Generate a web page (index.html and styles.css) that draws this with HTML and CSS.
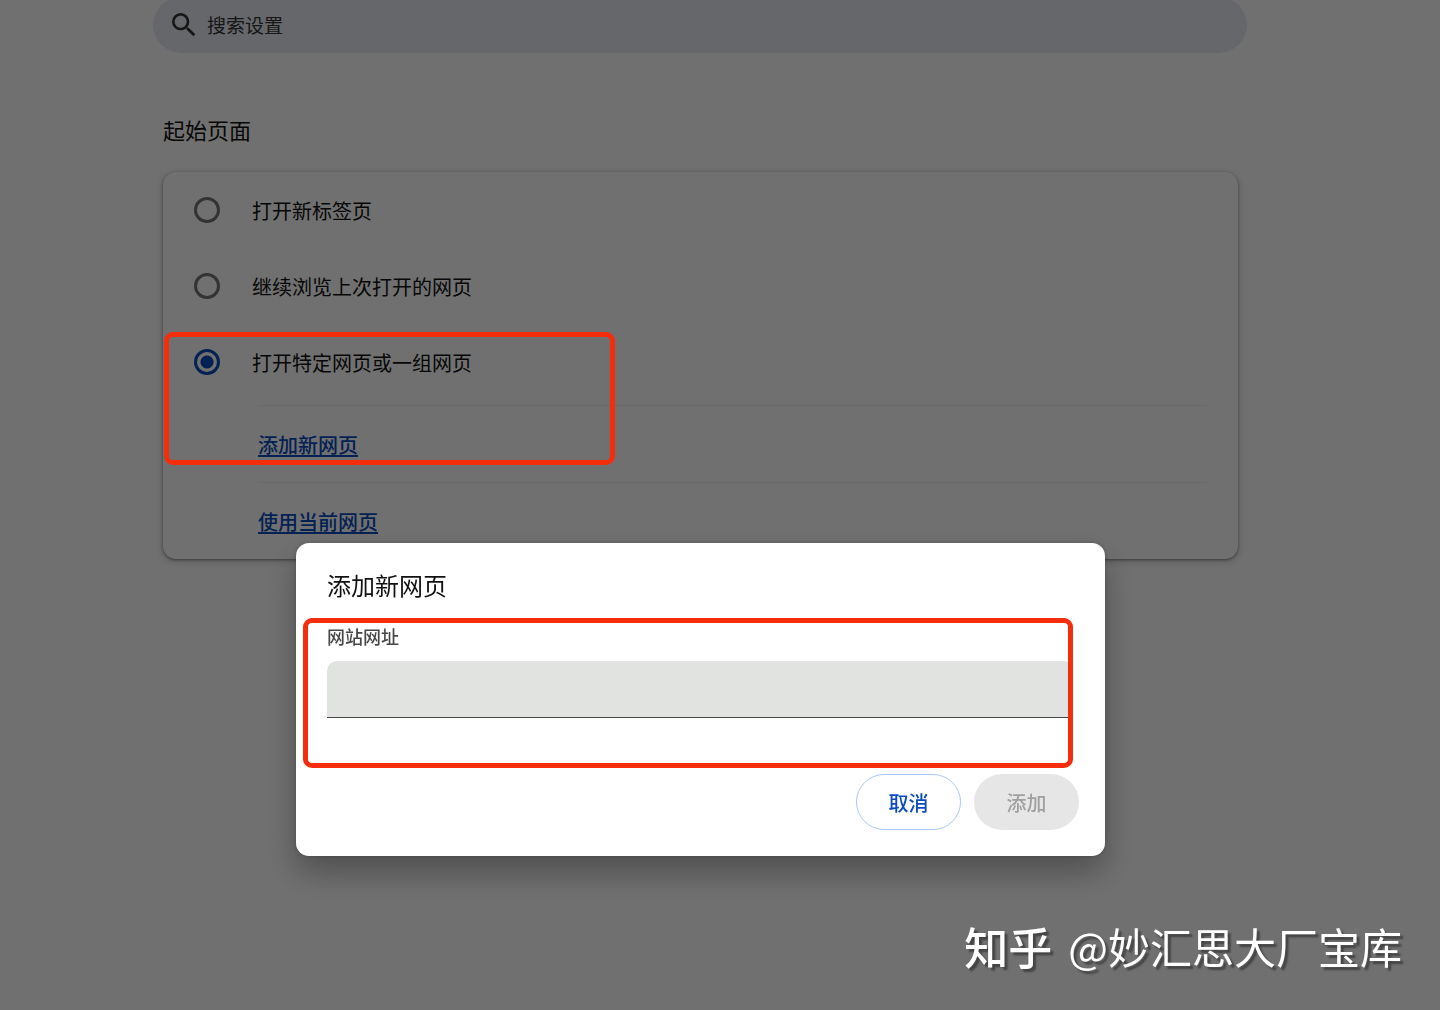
FILE: index.html
```html
<!DOCTYPE html>
<html lang="zh-CN">
<head>
  <meta charset="UTF-8">
  <title>设置 - 起始页面</title>
  <link rel="stylesheet" href="styles.css">
</head>
<body>

  <header class="toolbar">
    <label class="search">
      <svg class="search-icon" viewBox="0 0 24 24" aria-hidden="true">
        <path d="M15.5 14h-.79l-.28-.27A6.47 6.47 0 0 0 16 9.5 6.5 6.5 0 1 0 9.5 16c1.61 0 3.09-.59 4.23-1.57l.27.28v.79l5 4.99L20.49 19l-4.99-5zm-6 0C7.01 14 5 11.99 5 9.5S7.01 5 9.5 5 14 7.01 14 9.5 11.99 14 9.5 14z"/>
      </svg>
      <input type="search" placeholder="搜索设置" aria-label="搜索设置">
    </label>
  </header>

  <main>
    <h1>起始页面</h1>
    <section class="card">
      <label class="option">
        <input type="radio" name="startup">
        <span>打开新标签页</span>
      </label>
      <label class="option">
        <input type="radio" name="startup">
        <span>继续浏览上次打开的网页</span>
      </label>
      <label class="option">
        <input type="radio" name="startup" checked>
        <span>打开特定网页或一组网页</span>
      </label>
      <div class="links">
        <div class="link-row"><a href="#add">添加新网页</a></div>
        <div class="link-row"><a href="#current">使用当前网页</a></div>
      </div>
      <div class="mark mark-option"></div>
    </section>
  </main>

  <div class="backdrop">
    <form class="dialog" id="add" role="dialog" aria-labelledby="dialog-title">
      <h2 id="dialog-title">添加新网页</h2>
      <div class="field">
        <label for="url">网站网址</label>
        <input type="text" id="url" name="url">
        <div class="mark mark-field"></div>
      </div>
      <div class="actions">
        <button type="button" class="cancel">取消</button>
        <button type="submit" class="submit" disabled>添加</button>
      </div>
    </form>
  </div>

  <div class="watermark"><strong>知乎</strong><span>@妙汇思大厂宝库</span></div>

</body>
</html>
```

FILE: styles.css
```css
* {
  box-sizing: border-box;
}

body {
  font-family: "Noto Sans CJK SC", sans-serif;
  background-color: #fff;
  color: #111;
  margin: 0;
  height: 100vh;
  overflow: hidden;
}

input, button {
  font-family: inherit;
}

.toolbar {
  margin-top: -3px;
  padding: 0 193px 0 153px;
}

.search {
  display: flex;
  align-items: center;
  gap: 7px;
  height: 56px;
  padding: 0 15px;
  border-radius: 28px;
  background-color: #e9ebf3;
}

.search-icon {
  width: 32px;
  height: 32px;
  fill: #333;
}

.search input {
  flex: 1;
  padding: 0 0 2px;
  border: 0;
  outline: 0;
  background: none;
  font-size: 19px;
}

.search input::placeholder {
  color: #333;
}

main {
  padding: 60px 202px 0 163px;
}

h1 {
  margin: 0 0 27px;
  font-size: 22px;
  font-weight: 400;
  line-height: 32px;
}

.card {
  position: relative;
  border-radius: 13px;
  font-size: 20px;
  box-shadow: 0 1px 3px rgba(0, 0, 0, 0.4), 0 2px 8px rgba(0, 0, 0, 0.2);
}

.option {
  display: flex;
  align-items: center;
  gap: 32px;
  height: 76px;
  padding: 0 31px;
}

.option input {
  appearance: none;
  width: 26px;
  height: 26px;
  margin: 0;
  border: 3px solid #757575;
  border-radius: 50%;
}

.option input:checked {
  border-color: #0b4cc0;
  background: radial-gradient(circle, #0b4cc0 6px, transparent 7px);
}

.links {
  margin: 5px 31px 0 95px;
}

.link-row {
  display: flex;
  align-items: center;
  height: 77px;
  border-top: 1px solid #f0f0f0;
}

.link-row a {
  color: #0b4cc0;
  font-weight: 500;
  text-underline-offset: 2px;
}

/* 红色标注框 */
.mark {
  position: absolute;
  border: 5px solid #f52d0c;
  border-radius: 9px;
  pointer-events: none;
}

.mark-option {
  top: 160px;
  left: 1px;
  width: 451px;
  height: 133px;
  z-index: 2;
}

.mark-field {
  top: -6px;
  right: 0;
  bottom: -50px;
  left: -24px;
}

.backdrop {
  position: fixed;
  inset: 0;
  z-index: 1;
  display: flex;
  justify-content: center;
  align-items: flex-start;
  padding: 543px 39px 0 0;
  background-color: rgba(0, 0, 0, 0.56);
}

.dialog {
  width: 809px;
  padding: 26px 26px 26px 31px;
  border-radius: 13px;
  background-color: #fff;
  box-shadow: 0 0 4px rgba(0, 0, 0, 0.2), 0 16px 32px rgba(0, 0, 0, 0.3);
}

h2 {
  margin: 0 0 23px;
  font-size: 24px;
  font-weight: 400;
  line-height: 32px;
}

.field {
  position: relative;
  margin-right: 6px;
}

.field label {
  display: block;
  margin-bottom: 13px;
  color: #474747;
  font-size: 18px;
  font-weight: 500;
  line-height: 24px;
}

.field input {
  display: block;
  width: 100%;
  height: 57px;
  padding: 0 12px;
  border: 0;
  border-bottom: 1px solid #474747;
  border-radius: 10px 10px 0 0;
  outline: 0;
  background-color: #e1e3e1;
  font-size: 20px;
}

.actions {
  display: flex;
  justify-content: flex-end;
  gap: 13px;
  margin-top: 56px;
}

button {
  width: 105px;
  height: 56px;
  border: 0;
  border-radius: 28px;
  font-size: 20px;
  font-weight: 500;
}

.cancel {
  border: 1px solid #a8c7fa;
  background-color: #fff;
  color: #0b4cc0;
  cursor: pointer;
}

.submit {
  background-color: #e6e6e6;
  color: #a0a0a0;
}

.watermark {
  position: fixed;
  right: 38px;
  bottom: 34px;
  z-index: 3;
  display: flex;
  align-items: center;
  gap: 16px;
  color: #fff;
  font-size: 42px;
  line-height: 60px;
  text-shadow: 3px 3px 2px rgba(0, 0, 0, 0.4);
}

.watermark strong {
  font-size: 44px;
  font-weight: 500;
}
```
